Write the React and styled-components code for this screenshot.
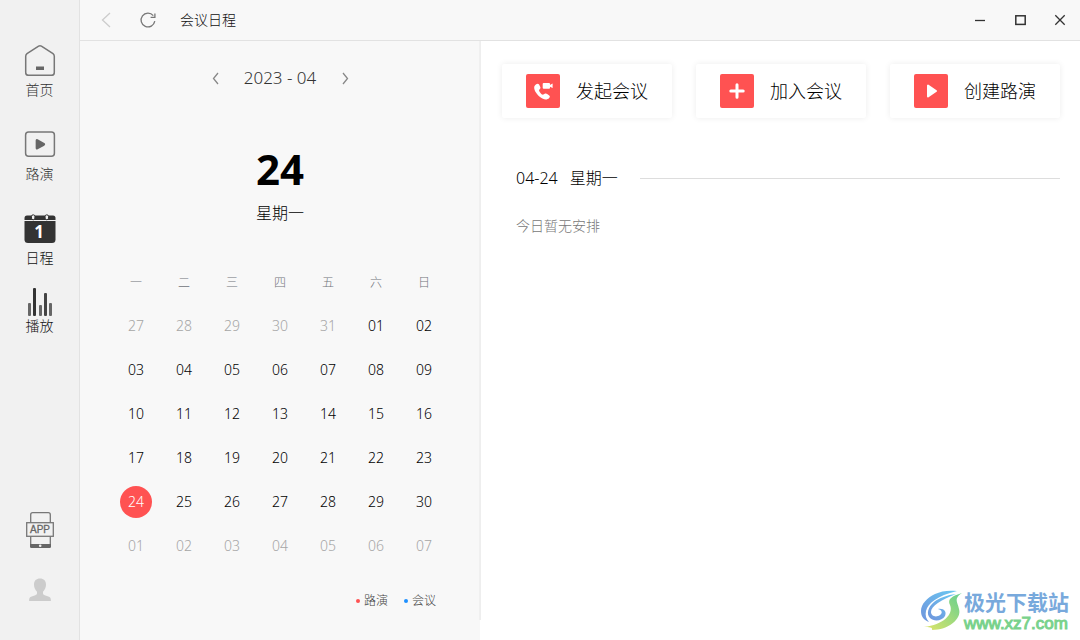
import React from 'react';
import styled, {createGlobalStyle} from "styled-components";


const theme = {
    side: "#f1f1f1",
    panel: "#f8f8f8",
    line: "#e2e2e2",
    red: "#ff5252",
    blue: "#1e90ff",
};

const GlobalStyle = createGlobalStyle`
    * {
        box-sizing: border-box;
    }

    body {
        margin: 0;
        background-color: white;
        color: #000;
        font-family: "Noto Sans", "Noto Sans CJK SC", sans-serif;
        font-size: 14px;
        font-weight: 300;
        line-height: 20px;
    }

    button {
        padding: 0;
        border: none;
        background: none;
        color: inherit;
        font: inherit;
        cursor: pointer;
    }

    svg {
        display: block;
    }
`

const PageLayout = styled.div`
    position: relative;
    display: flex;
    min-height: 100vh;
`

const Sidebar = styled.aside`
    display: flex;
    flex-direction: column;
    justify-content: space-between;
    flex: 0 0 80px;
    padding: 44px 0 30px;
    background-color: ${theme.side};
    border-right: 1px solid ${theme.line};
`

const SideNav = styled.nav`
    display: flex;
    flex-direction: column;
    align-items: center;
    gap: 16px;
`

const SideLink = styled.a`
    display: flex;
    flex-direction: column;
    align-items: center;
    gap: ${props => props.$tight ? "0" : "4px"};
    padding-bottom: ${props => props.$spaced ? "12px" : "0"};
    color: ${props => props.$active ? "#111" : "#333"};
    text-decoration: none;
    line-height: 20px;
`

const SideFooter = styled.div`
    display: flex;
    flex-direction: column;
    align-items: center;
    gap: 21px;
`

const Avatar = styled.button`
    display: grid;
    place-items: center;
    width: 40px;
    height: 40px;
    background-color: #f2f2f2;
`

const Content = styled.div`
    display: flex;
    flex-direction: column;
    flex: 1;
    min-width: 0;
`

const TitleBar = styled.header`
    display: flex;
    align-items: center;
    gap: 22px;
    height: 41px;
    padding-left: 16px;
    background-color: ${theme.panel};
    border-bottom: 1px solid ${theme.line};
`

const Title = styled.h1`
    flex: 1;
    margin: 0;
    color: #111;
    font-size: 14px;
    font-weight: inherit;
`

const WindowControls = styled.div`
    display: flex;
`

const IconButton = styled.button`
    display: grid;
    place-items: center;
    width: ${props => props.$wide ? "40px" : "20px"};
    height: ${props => props.$wide ? "40px" : "20px"};
`

const Columns = styled.div`
    display: flex;
    flex: 1;
`

const CalendarPanel = styled.section`
    display: flex;
    flex: 0 0 400px;
    background-color: ${theme.panel};
`

const CalendarBody = styled.div`
    display: flex;
    flex-direction: column;
    align-items: center;
    flex: 1;
    margin-bottom: 20px;
    padding-top: 27px;
    box-shadow: 1px 0 0 #eee, inset -1px 0 0 #f0f0f0;
`

const MonthPicker = styled.div`
    display: flex;
    align-items: center;
    margin-bottom: 57px;
`

const MonthLabel = styled.span`
    width: 110px;
    color: #333;
    font-size: 17px;
    text-align: center;
`

const BigDay = styled.div`
    margin-bottom: 8px;
    font-size: 42px;
    font-weight: 700;
    line-height: 48px;
`

const BigWeekday = styled.div`
    margin-bottom: 35px;
    font-size: 16px;
    line-height: 24px;
`

const DayTable = styled.table`
    border-collapse: collapse;
    table-layout: fixed;
    width: 336px;

    tr {
        height: 44px;
    }

    th {
        padding: 2px 0 0;
        color: #70747a;
        font-size: 12px;
        font-weight: inherit;
    }

    td {
        padding: 0;
        text-align: center;
    }
`

const Day = styled.button`
    width: 32px;
    height: 32px;
    border-radius: 50%;
    background-color: ${props => props.$selected ? theme.red : "transparent"};
    color: ${props => props.$selected ? "white" : props.$outside ? "#a6a6a6" : "#000"};
    font-size: 14px;
`

const Legend = styled.ul`
    display: flex;
    justify-content: flex-end;
    gap: 16px;
    width: 336px;
    margin: 24px 0 0;
    padding: 0 12px 0 0;
    list-style: none;
`

const LegendItem = styled.li`
    display: flex;
    align-items: center;
    gap: 4px;
    color: #444;
    font-size: 12px;
    line-height: 18px;

    &::before {
        content: "";
        width: 4px;
        height: 4px;
        border-radius: 50%;
        background-color: ${props => props.$color};
    }
`

const Main = styled.main`
    flex: 1;
    padding: 23px 20px 20px 22px;
`

const Actions = styled.div`
    display: flex;
    gap: 24px;
`

const ActionCard = styled.button`
    display: flex;
    align-items: center;
    justify-content: center;
    flex: 1;
    gap: 16px;
    height: 54px;
    border-radius: 2px;
    background-color: white;
    box-shadow: 0 0 6px rgba(0, 0, 0, 0.08);
    font-size: 18px;
    white-space: nowrap;
`

const ActionIcon = styled.span`
    display: grid;
    place-items: center;
    width: 34px;
    height: 34px;
    border-radius: 2px;
    background-color: ${theme.red};
`

const Agenda = styled.section`
    padding: 48px 0 0 14px;
`

const AgendaTitle = styled.h2`
    display: flex;
    align-items: center;
    gap: 12px;
    margin: 0 0 26px;
    font-size: 16px;
    font-weight: inherit;
    line-height: 24px;

    &::after {
        content: "";
        flex: 1;
        height: 1px;
        margin-left: 10px;
        background-color: #ddd;
    }
`

const Empty = styled.p`
    margin: 0;
    color: #777;
`

const Watermark = styled.div`
    position: absolute;
    right: 11px;
    bottom: 6px;
    display: flex;
    align-items: center;
`

const SiteName = styled.div`
    color: #78a9dc;
    font-size: 21px;
    font-weight: 700;
    line-height: 24px;
`

const SiteUrl = styled.div`
    color: #79d28c;
    font-family: "Liberation Sans", sans-serif;
    font-size: 17px;
    line-height: 20px;
    -webkit-text-stroke: 1px #79d28c;
`


const HomeIcon = () => (
    <svg width="32" height="32" viewBox="0 0 32 32" fill="none">
        <path d="M14.6 2.1 3 9.6Q1.7 10.6 1.7 12.2V28.5Q1.7 31.3 4.5 31.3H27.5Q30.3 31.3 30.3 28.5V12.2Q30.3 10.6 29 9.6L17.4 2.1Q16 1.2 14.6 2.1Z" stroke="#777" strokeWidth="1.5"/>
        <rect x="12" y="22.5" width="8" height="3.5" fill="#666"/>
    </svg>
)

const RoadshowIcon = () => (
    <svg width="32" height="32" viewBox="0 0 32 32" fill="none">
        <rect x="1.6" y="3.9" width="28.8" height="24.4" rx="3" stroke="#777" strokeWidth="1.5"/>
        <path d="M12.4 12.5v7.6q0 1 .9.5l6.6-3.6q1-.7 0-1.3L13.3 12q-.9-.5-.9.5Z" fill="#666" stroke="#666" strokeWidth="1.5"/>
    </svg>
)

const ScheduleIcon = () => (
    <svg width="32" height="32" viewBox="0 0 32 32">
        <path d="M.5 8V6Q.5 3.5 3 3.5H29Q31.5 3.5 31.5 6V8Z" fill="#333"/>
        <path d="M.5 9H31.5V27.5Q31.5 31 28 31H4Q.5 31 .5 27.5Z" fill="#333"/>
        <rect x="7.5" y="2.8" width="3.4" height="5" rx="1.7" fill="#f1f1f1" stroke="#333"/>
        <rect x="21.1" y="2.8" width="3.4" height="5" rx="1.7" fill="#f1f1f1" stroke="#333"/>
        <text x="15" y="26" fill="#fff" fontFamily="Noto Sans" fontWeight="700" fontSize="17" textAnchor="middle">1</text>
    </svg>
)

const PlaybackIcon = () => (
    <svg width="32" height="32" viewBox="0 0 32 32">
        <rect x="4" y="19" width="3" height="13" rx="1" fill="#666"/>
        <rect x="9" y="4" width="3" height="28" rx="1" fill="#333"/>
        <rect x="15" y="21" width="3" height="11" rx="1" fill="#666"/>
        <rect x="20" y="9" width="3" height="23" rx="1" fill="#444"/>
        <rect x="25" y="19" width="3" height="13" rx="1" fill="#666"/>
    </svg>
)

const AppIcon = () => (
    <svg width="28" height="38" viewBox="0 0 28 38" fill="none">
        <rect x="4.7" y="1.7" width="19.6" height="34.6" rx="2" stroke="#777" strokeWidth="1.3"/>
        <path d="M4 33H25V35.5Q25 37 23.5 37H5.5Q4 37 4 35.5Z" fill="#666"/>
        <circle cx="14.2" cy="34.8" r="1.3" fill="#f1f1f1"/>
        <rect x=".7" y="11.7" width="26.6" height="13.6" fill="#f1f1f1" stroke="#777" strokeWidth="1.3"/>
        <text x="14" y="22" fill="#666" fontFamily="Liberation Sans" fontWeight="400" fontSize="10" stroke="#666" strokeWidth=".3" textAnchor="middle">APP</text>
    </svg>
)

const UserIcon = () => (
    <svg width="24" height="24" viewBox="0 0 24 24" fill="#ccc">
        <path d="M12 .6c3.7 0 6 2.2 6 6 0 3-1.2 5.6-3 7.1v1.5c0 1 .6 1.500 1.700 2l4.300 1.500c1.300.5 1.900 1.700 1.900 4.300H1.100c0-2.600.6-3.800 1.900-4.300l4.300-1.500c1.100-.5 1.700-1 1.700-2v-1.500c-1.800-1.500-3-4.100-3-7.100 0-3.800 2.300-6 6-6Z"/>
    </svg>
)

const Chevron = ({direction, height, width, color}) => (
    <svg width={width + 2} height={height + 2} fill="none" stroke={color} strokeWidth="1.3">
        {direction === "left"
            ? <path d={`M${width + 1} 1L1.5 ${height / 2 + 1}L${width + 1} ${height + 1}`}/>
            : <path d={`M1 1L${width + .5} ${height / 2 + 1}L1 ${height + 1}`}/>}
    </svg>
)

const RefreshIcon = () => (
    <svg width="18" height="18" viewBox="0 0 18 18" fill="none" stroke="#777" strokeWidth="1.3">
        <path d="M15.8 10.2A6.9 6.9 0 1 1 14.3 4.6"/>
        <path d="M15.9 2.6V6.3H11.6"/>
    </svg>
)

const CallIcon = () => (
    <svg width="22" height="22" viewBox="0 0 22 22" fill="#fff">
        <path d="M4.2 4.2C5.3 3.3 6.5 3.5 7.1 4.6L8.3 6.9C8.7 7.8 8.4 8.6 7.4 9.4 6.8 10 7 10.9 8.1 12.5 9.4 14.2 10.5 15 11.4 14.6L12.7 13.8C13.6 13.3 14.4 13.4 15.2 14L17.2 15.5C18.1 16.2 18 17 17.2 17.9 15.3 20 11.7 20 8 17.1 3.9 13.8 1.4 8.9 2.4 6.3 2.8 5.3 3.3 4.8 4.2 4.2Z"/>
        <rect x="10.7" y="3" width="7.3" height="5.7" rx="1"/>
        <path d="M17.5 5.2 20.6 3.6V8.1L17.5 6.6Z"/>
    </svg>
)

const PlusIcon = () => (
    <svg width="16" height="16" viewBox="0 0 16 16" stroke="#fff" strokeWidth="3" strokeLinecap="round">
        <path d="M1.8 8H14.2M8 1.8V14.2"/>
    </svg>
)

const PlayIcon = () => (
    <svg width="14" height="16" viewBox="0 0 14 16" fill="#fff" stroke="#fff" strokeWidth="2" strokeLinejoin="round">
        <path d="M4 2.5V13.5L12 8Z"/>
    </svg>
)

const SwirlLogo = () => (
    <svg width="48" height="44" viewBox="0 0 48 44">
        <defs>
            <linearGradient id="swirlBlue" x1="0" y1="1" x2="1" y2="0">
                <stop offset="0" stopColor="#7094dc"/>
                <stop offset="1" stopColor="#69c8f2"/>
            </linearGradient>
            <linearGradient id="swirlGreen" x1="0" y1="1" x2="1" y2="0">
                <stop offset="0" stopColor="#e0e568"/>
                <stop offset="1" stopColor="#62cf91"/>
            </linearGradient>
        </defs>
        <path d="M41 1C33 0 25 1 19 4 11 8 5 14 5 21 5 27 8 30 13 32 10 29 9 25 10 21 12 13 21 6 41 1Z" fill="url(#swirlBlue)"/>
        <path d="M40 4C31 5 23 8 18 12 12 17 10 24 14 28 18 32 26 31 29 26 31 22 28 18 22 19 26 20 27 23 24 25 20 28 15 26 15 22 15 16 25 10 40 4Z" fill="url(#swirlBlue)"/>
        <path d="M46 3C36 6 31 9 34 15 38 24 27 35 8 37 13 37 17 37 16 40 32 40 46 29 43 19 42 12 37 9 46 3Z" fill="url(#swirlGreen)"/>
    </svg>
)


const weekdays = ["一", "二", "三", "四", "五", "六", "日"];

const selectedDay = 24;

const pad = value => String(value).padStart(2, "0");

// April 2023 starts on a saturday, so five days of march come first
const weeks = Array.from({length: 6}, (_, week) =>
    Array.from({length: 7}, (_, day) => {
        let number = week * 7 + day - 4;
        if(number < 1){
            return {label: pad(number + 31), outside: true};
        }
        if(number > 30){
            return {label: pad(number - 30), outside: true};
        }
        return {label: pad(number), outside: false, selected: number === selectedDay};
    })
);

let SideMenu = () =>{
    return(
        <Sidebar>
            <SideNav>
                <SideLink href="#home" $spaced><HomeIcon/>首页</SideLink>
                <SideLink href="#roadshow" $spaced><RoadshowIcon/>路演</SideLink>
                <SideLink href="#schedule" $active><ScheduleIcon/>日程</SideLink>
                <SideLink href="#playback" $active $tight><PlaybackIcon/>播放</SideLink>
            </SideNav>
            <SideFooter>
                <button type="button" aria-label="APP"><AppIcon/></button>
                <Avatar type="button" aria-label="用户"><UserIcon/></Avatar>
            </SideFooter>
        </Sidebar>
    );
};

let TopBar = () =>{
    return(
        <TitleBar>
            <IconButton type="button" aria-label="返回"><Chevron direction="left" width={8} height={14} color="#ccc"/></IconButton>
            <IconButton type="button" aria-label="刷新"><RefreshIcon/></IconButton>
            <Title>会议日程</Title>
            <WindowControls>
                <IconButton type="button" aria-label="最小化" $wide>
                    <svg width="12" height="12" stroke="#333" strokeWidth="1.3"><path d="M1 6.5H11"/></svg>
                </IconButton>
                <IconButton type="button" aria-label="最大化" $wide>
                    <svg width="12" height="12" fill="none" stroke="#333" strokeWidth="1.5"><rect x="1.8" y="1.8" width="9.4" height="8.6"/></svg>
                </IconButton>
                <IconButton type="button" aria-label="关闭" $wide>
                    <svg width="12" height="12" stroke="#333" strokeWidth="1.3"><path d="M1.3 1.3 10.7 10.7M10.7 1.3 1.3 10.7"/></svg>
                </IconButton>
            </WindowControls>
        </TitleBar>
    );
};

let Calendar = () =>{
    return(
        <CalendarPanel>
            <CalendarBody>
                <MonthPicker>
                    <IconButton type="button" aria-label="上个月"><Chevron direction="left" width={5} height={11} color="#888"/></IconButton>
                    <MonthLabel>2023 - 04</MonthLabel>
                    <IconButton type="button" aria-label="下个月"><Chevron direction="right" width={5} height={11} color="#888"/></IconButton>
                </MonthPicker>
                <BigDay>{selectedDay}</BigDay>
                <BigWeekday>星期一</BigWeekday>
                <DayTable>
                    <thead>
                        <tr>{weekdays.map(name => <th key={name} scope="col">{name}</th>)}</tr>
                    </thead>
                    <tbody>
                        {weeks.map((week, index) => (
                            <tr key={index}>
                                {week.map(day => (
                                    <td key={day.label}>
                                        <Day type="button" $outside={day.outside} $selected={day.selected}>{day.label}</Day>
                                    </td>
                                ))}
                            </tr>
                        ))}
                    </tbody>
                </DayTable>
                <Legend>
                    <LegendItem $color={theme.red}>路演</LegendItem>
                    <LegendItem $color={theme.blue}>会议</LegendItem>
                </Legend>
            </CalendarBody>
        </CalendarPanel>
    );
};

let App = () =>{
    return(
        <PageLayout>
            <GlobalStyle/>
            <SideMenu/>
            <Content>
                <TopBar/>
                <Columns>
                    <Calendar/>
                    <Main>
                        <Actions>
                            <ActionCard type="button"><ActionIcon><CallIcon/></ActionIcon>发起会议</ActionCard>
                            <ActionCard type="button"><ActionIcon><PlusIcon/></ActionIcon>加入会议</ActionCard>
                            <ActionCard type="button"><ActionIcon><PlayIcon/></ActionIcon>创建路演</ActionCard>
                        </Actions>
                        <Agenda>
                            <AgendaTitle><span>04-24</span><span>星期一</span></AgendaTitle>
                            <Empty>今日暂无安排</Empty>
                        </Agenda>
                    </Main>
                </Columns>
            </Content>
            <Watermark>
                <SwirlLogo/>
                <div>
                    <SiteName>极光下载站</SiteName>
                    <SiteUrl>www.xz7.com</SiteUrl>
                </div>
            </Watermark>
        </PageLayout>
    );
};

export default App;
